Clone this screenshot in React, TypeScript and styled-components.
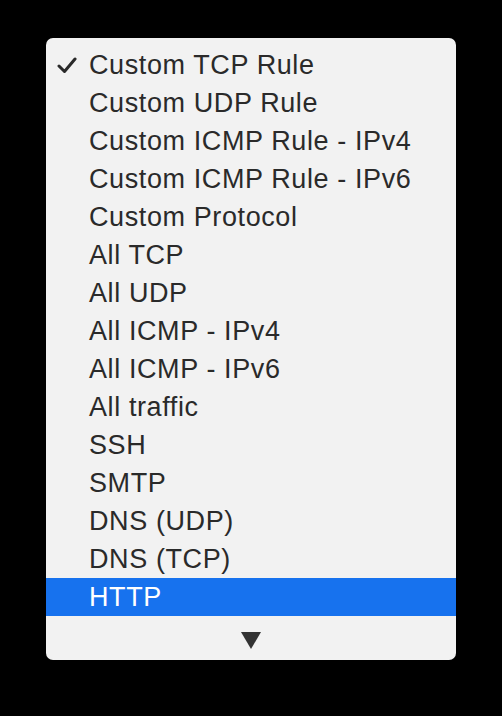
import React from "react";
import styled, { createGlobalStyle } from "styled-components";

const Global = createGlobalStyle`
  html, body { margin: 0; padding: 0; background: #000; }
  body { width: 502px; height: 716px; overflow: hidden; }
`;

const Page = styled.div`
  width: 502px;
  height: 716px;
  background: #000;
  padding: 38px 0 0 46px;
  box-sizing: border-box;
`;

const Menu = styled.div`
  width: 410px;
  height: 622px;
  background: #f2f2f2;
  border-radius: 7px;
  padding-top: 8px;
  box-sizing: border-box;
  display: flex;
  flex-direction: column;
  overflow: hidden;
  font-family: "Liberation Sans", Arial, sans-serif;
`;

const Viewport = styled.div`
  height: 579px;
  overflow: hidden;
  flex: none;
`;

const Row = styled.div<{ $active?: boolean }>`
  position: relative;
  height: 38px;
  line-height: 38px;
  padding-left: 43px;
  font-size: 27px;
  letter-spacing: 0.6px;
  color: ${(p) => (p.$active ? "#ffffff" : "#2a2a2a")};
  background: ${(p) => (p.$active ? "#1772ee" : "transparent")};
  white-space: nowrap;
`;

const Check = styled.svg`
  position: absolute;
  left: 11px;
  top: 11px;
  width: 20px;
  height: 17px;
`;

const ArrowBar = styled.div`
  flex: 1;
  display: flex;
  justify-content: center;
  padding-top: 7px;
`;

const items = [
  "Custom TCP Rule",
  "Custom UDP Rule",
  "Custom ICMP Rule - IPv4",
  "Custom ICMP Rule - IPv6",
  "Custom Protocol",
  "All TCP",
  "All UDP",
  "All ICMP - IPv4",
  "All ICMP - IPv6",
  "All traffic",
  "SSH",
  "SMTP",
  "DNS (UDP)",
  "DNS (TCP)",
  "HTTP",
  "POP3",
];

export default function App() {
  return (
    <>
      <Global />
      <Page>
        <Menu>
          <Viewport>
            {items.map((t, i) => (
              <Row key={t} $active={t === "HTTP"}>
                {i === 0 && (
                  <Check viewBox="0 0 20 17">
                    <path
                      d="M2 9 L7.5 14.5 L18 2"
                      fill="none"
                      stroke="#2a2a2a"
                      strokeWidth="3"
                      strokeLinecap="round"
                      strokeLinejoin="round"
                    />
                  </Check>
                )}
                {t}
              </Row>
            ))}
          </Viewport>
          <ArrowBar>
            <svg width="20" height="17" viewBox="0 0 20 17">
              <polygon points="0,0 20,0 10,17" fill="#333" />
            </svg>
          </ArrowBar>
        </Menu>
      </Page>
    </>
  );
}
